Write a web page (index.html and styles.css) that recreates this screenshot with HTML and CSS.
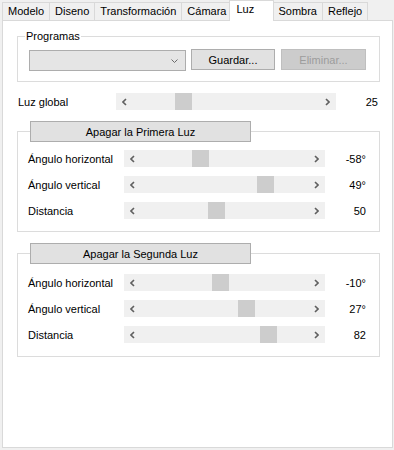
FILE: index.html
```html
<!DOCTYPE html>
<html lang="es">
<head>
    <meta charset="UTF-8">
    <title>Luz</title>
    <link rel="stylesheet" href="styles.css">
</head>
<body>

<div class="tabs">
    <div class="tab">Modelo</div>
    <div class="tab">Diseno</div>
    <div class="tab">Transformación</div>
    <div class="tab">Cámara</div>
    <div class="tab active">Luz</div>
    <div class="tab">Sombra</div>
    <div class="tab">Reflejo</div>
</div>

<div class="panel">
    <fieldset class="group programs">
        <legend class="caption">Programas</legend>
        <div class="program-row">
            <div class="combo">
                <svg width="7" height="4" viewBox="0 0 7 4"><path d="M0.5 0.5 L3.5 3.5 L6.5 0.5" fill="none" stroke="#6b6b6b" stroke-width="1"/></svg>
            </div>
            <button class="btn save">Guardar...</button>
            <button class="btn" disabled>Eliminar...</button>
        </div>
    </fieldset>

    <div class="row global">
        <span class="label">Luz global</span>
        <div class="scroll">
            <span class="arrow"><svg width="5" height="8" viewBox="0 0 5 8"><path d="M4 1 L1 4 L4 7" fill="none" stroke="#606060" stroke-width="1.6"/></svg></span>
            <div class="area"><div class="thumb" style="margin-left: calc((100% - 17px) * 0.25)"></div></div>
            <span class="arrow"><svg width="5" height="8" viewBox="0 0 5 8"><path d="M1 1 L4 4 L1 7" fill="none" stroke="#606060" stroke-width="1.6"/></svg></span>
        </div>
        <span class="value">25</span>
    </div>

    <!-- primera luz -->
    <fieldset class="group light">
        <legend><button class="btn toggle">Apagar la Primera Luz</button></legend>
        <div class="row">
            <span class="label">Ángulo horizontal</span>
            <div class="scroll">
                <span class="arrow"><svg width="5" height="8" viewBox="0 0 5 8"><path d="M4 1 L1 4 L4 7" fill="none" stroke="#606060" stroke-width="1.6"/></svg></span>
                <div class="area"><div class="thumb" style="margin-left: calc((100% - 17px) * 0.339)"></div></div>
                <span class="arrow"><svg width="5" height="8" viewBox="0 0 5 8"><path d="M1 1 L4 4 L1 7" fill="none" stroke="#606060" stroke-width="1.6"/></svg></span>
            </div>
            <span class="value">-58°</span>
        </div>
        <div class="row">
            <span class="label">Ángulo vertical</span>
            <div class="scroll">
                <span class="arrow"><svg width="5" height="8" viewBox="0 0 5 8"><path d="M4 1 L1 4 L4 7" fill="none" stroke="#606060" stroke-width="1.6"/></svg></span>
                <div class="area"><div class="thumb" style="margin-left: calc((100% - 17px) * 0.77)"></div></div>
                <span class="arrow"><svg width="5" height="8" viewBox="0 0 5 8"><path d="M1 1 L4 4 L1 7" fill="none" stroke="#606060" stroke-width="1.6"/></svg></span>
            </div>
            <span class="value">49°</span>
        </div>
        <div class="row">
            <span class="label">Distancia</span>
            <div class="scroll">
                <span class="arrow"><svg width="5" height="8" viewBox="0 0 5 8"><path d="M4 1 L1 4 L4 7" fill="none" stroke="#606060" stroke-width="1.6"/></svg></span>
                <div class="area"><div class="thumb" style="margin-left: calc((100% - 17px) * 0.447)"></div></div>
                <span class="arrow"><svg width="5" height="8" viewBox="0 0 5 8"><path d="M1 1 L4 4 L1 7" fill="none" stroke="#606060" stroke-width="1.6"/></svg></span>
            </div>
            <span class="value">50</span>
        </div>
    </fieldset>

    <!-- segunda luz -->
    <fieldset class="group light second">
        <legend><button class="btn toggle">Apagar la Segunda Luz</button></legend>
        <div class="row">
            <span class="label">Ángulo horizontal</span>
            <div class="scroll">
                <span class="arrow"><svg width="5" height="8" viewBox="0 0 5 8"><path d="M4 1 L1 4 L4 7" fill="none" stroke="#606060" stroke-width="1.6"/></svg></span>
                <div class="area"><div class="thumb" style="margin-left: calc((100% - 17px) * 0.472)"></div></div>
                <span class="arrow"><svg width="5" height="8" viewBox="0 0 5 8"><path d="M1 1 L4 4 L1 7" fill="none" stroke="#606060" stroke-width="1.6"/></svg></span>
            </div>
            <span class="value">-10°</span>
        </div>
        <div class="row">
            <span class="label">Ángulo vertical</span>
            <div class="scroll">
                <span class="arrow"><svg width="5" height="8" viewBox="0 0 5 8"><path d="M4 1 L1 4 L4 7" fill="none" stroke="#606060" stroke-width="1.6"/></svg></span>
                <div class="area"><div class="thumb" style="margin-left: calc((100% - 17px) * 0.65)"></div></div>
                <span class="arrow"><svg width="5" height="8" viewBox="0 0 5 8"><path d="M1 1 L4 4 L1 7" fill="none" stroke="#606060" stroke-width="1.6"/></svg></span>
            </div>
            <span class="value">27°</span>
        </div>
        <div class="row">
            <span class="label">Distancia</span>
            <div class="scroll">
                <span class="arrow"><svg width="5" height="8" viewBox="0 0 5 8"><path d="M4 1 L1 4 L4 7" fill="none" stroke="#606060" stroke-width="1.6"/></svg></span>
                <div class="area"><div class="thumb" style="margin-left: calc((100% - 17px) * 0.793)"></div></div>
                <span class="arrow"><svg width="5" height="8" viewBox="0 0 5 8"><path d="M1 1 L4 4 L1 7" fill="none" stroke="#606060" stroke-width="1.6"/></svg></span>
            </div>
            <span class="value">82</span>
        </div>
    </fieldset>
</div>

</body>
</html>
```

FILE: styles.css
```css
/* Panel de luz */
* {
    box-sizing: border-box;
}

body {
    margin: 0;
    background-color: #f0f0f0;
    font-family: 'Liberation Sans', Arial, sans-serif;
    font-size: 11px;
    color: #000;
    width: 394px;
    height: 450px;
}

/* pestañas */
.tabs {
    display: flex;
    align-items: flex-end;
    height: 20px;
    padding-left: 2px;
}

.tab {
    height: 18px;
    line-height: 17px;
    padding: 0 5px;
    border: 1px solid #d9d9d9;
    border-bottom: none;
    margin-right: -1px;
    background-color: #f0f0f0;
}

.tab.active {
    width: 45px;
    height: 21px;
    line-height: 17px;
    padding: 0 0 0 6px;
    margin: 0 -2px -1px -2px;
    background-color: #fff;
    position: relative;
    z-index: 1;
}

.panel {
    margin: 0 1px 0 2px;
    height: 428px;
    border: 1px solid #d9d9d9;
    background-color: #fff;
}

/* grupos */
.group {
    margin: 0 12px 0 14px;
    padding: 0 11px 12px 10px;
    border: 1px solid #dcdcdc;
    min-width: 0;
}

.programs {
    margin-top: 9px;
    padding: 6px 11px 10px 11px;
}

.caption {
    padding: 0 1px;
    margin-left: -4px;
    line-height: 13px;
}

.program-row {
    display: flex;
    align-items: flex-start;
}

.combo {
    width: 157px;
    height: 21px;
    margin-top: 1px;
    border: 1px solid #adadad;
    background-color: #e5e5e5;
    display: flex;
    align-items: center;
    justify-content: flex-end;
    padding-right: 7px;
}

.btn {
    font-family: inherit;
    font-size: 11px;
    color: #000;
    height: 21px;
    border: 1px solid #adadad;
    background-color: #e1e1e1;
    padding: 0;
}

.save {
    width: 84px;
    margin: 0 6px 0 5px;
}

.btn:disabled {
    width: 85px;
    background-color: #cccccc;
    border-color: #bfbfbf;
    color: #9c9c9c;
}

.light {
    margin-top: 11px;
}

.light legend {
    padding: 0;
    margin-left: 2px;
}

.toggle {
    width: 221px;
    display: block;
}

/* filas con barra */
.row {
    display: flex;
    align-items: center;
    height: 17px;
    margin-top: 9px;
}

.light legend + .row {
    margin-top: 8px;
}

.second {
    padding-bottom: 13px;
}

.second legend + .row {
    margin-top: 10px;
}

.global {
    margin-top: 11px;
    padding-left: 15px;
}

.label {
    width: 96px;
    flex-shrink: 0;
}

.global .label {
    width: 98px;
}

.scroll {
    display: flex;
    width: 201px;
    height: 17px;
    background-color: #f0f0f0;
}

.global .scroll {
    width: 220px;
}

.arrow {
    width: 17px;
    display: flex;
    align-items: center;
    justify-content: center;
}

.area {
    flex: 1;
}

.thumb {
    width: 17px;
    height: 17px;
    background-color: #cdcdcd;
}

.value {
    width: 41px;
    text-align: right;
}

.global .value {
    width: 42px;
}
```
